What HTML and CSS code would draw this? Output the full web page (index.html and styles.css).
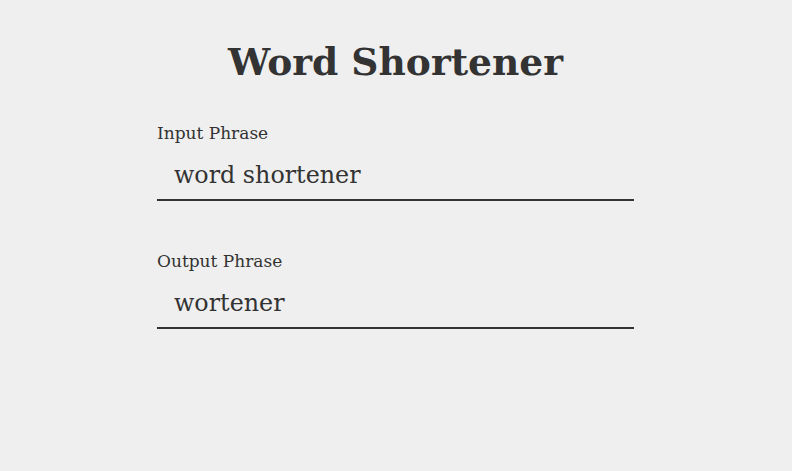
FILE: index.html
```html
<!DOCTYPE html>
<html>
<head>
<meta charset="utf-8">
<link rel="stylesheet" href="styles.css">
</head>
<body>
<main class="app">
  <h1 class="title">Word Shortener</h1>
  <div class="field">
    <label class="label" for="in">Input Phrase</label>
    <input class="input" id="in" type="text" value="word shortener">
  </div>
  <div class="field">
    <label class="label" for="out">Output Phrase</label>
    <input class="input" id="out" type="text" value="wortener" readonly>
  </div>
</main>
</body>
</html>
```
FILE: styles.css
```css
html, body {
  margin: 0;
  padding: 0;
  background: #efefef;
  color: #333333;
  font-family: "DejaVu Serif", "Liberation Serif", serif;
}
.app {
  width: 477px;
  margin-left: calc(50% - 239px);
  padding-top: 36px;
  display: flex;
  flex-direction: column;
}
.title {
  margin: 0 0 34px;
  text-align: center;
  font-size: 37.6px;
  font-weight: bold;
  line-height: 52px;
}
.field {
  display: flex;
  flex-direction: column;
  margin-bottom: 49px;
}
.label {
  font-size: 17px;
  line-height: 22px;
}
.input {
  border: none;
  border-bottom: 2px solid #333333;
  background: transparent;
  color: #333333;
  font-family: inherit;
  font-size: 23.8px;
  padding: 16px 17px 9px;
  height: 57px;
  box-sizing: border-box;
  outline: none;
}
```
